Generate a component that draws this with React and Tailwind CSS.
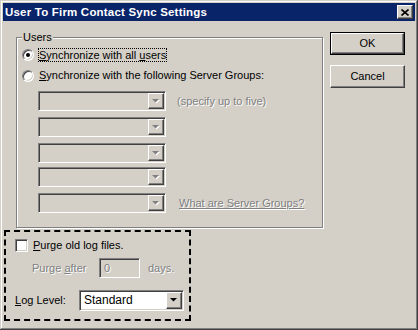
const raised =
  "border border-t-white border-l-white border-r-[#404040] border-b-[#404040] shadow-[inset_-1px_-1px_0_#808080,inset_1px_1px_0_#d4d0c8]";
const sunken =
  "border border-t-[#808080] border-l-[#808080] border-r-white border-b-white shadow-[inset_1px_1px_0_#404040,inset_-1px_-1px_0_#d4d0c8]";
const dim = "text-[#808080] [text-shadow:1px_1px_0_#ffffff]";

function Arrow({ disabled }) {
  return (
    <svg width="8" height="5" viewBox="0 0 8 5" className="overflow-visible">
      {disabled && <path d="M1 1h7L4.5 4.5z" fill="#ffffff" />}
      <path d="M0 0h7L3.5 3.5z" fill={disabled ? "#808080" : "#000000"} />
    </svg>
  );
}

function DropButton({ disabled, tall }) {
  return (
    <div
      className={`${raised} bg-[#d4d0c8] w-[16px] ${tall ? "h-[17px]" : "h-[16px]"} flex items-center justify-center shrink-0`}
    >
      <Arrow disabled={disabled} />
    </div>
  );
}

function Combo({ children }) {
  return (
    <div className="flex items-center h-[20px]">
      <div className={`${sunken} w-[128px] h-[20px] p-[1px] flex justify-end bg-[#d4d0c8]`}>
        <DropButton disabled />
      </div>
      {children}
    </div>
  );
}

function Radio({ checked }) {
  return (
    <div
      className={`w-[12px] h-[12px] rounded-full bg-white flex items-center justify-center shrink-0 border border-t-[#808080] border-l-[#808080] border-r-white border-b-white shadow-[inset_1px_1px_0_#404040,inset_-1px_-1px_0_#d4d0c8]`}
    >
      {checked && <div className="w-[4px] h-[4px] rounded-full bg-black" />}
    </div>
  );
}

export default function App() {
  return (
    <div className="w-[418px] h-[330px] p-[3px] bg-[#d4d0c8] text-[11px] leading-[13px] text-black font-['Liberation_Sans',Arial,sans-serif] shadow-[inset_-1px_-1px_0_#404040,inset_1px_1px_0_#d4d0c8,inset_-2px_-2px_0_#808080,inset_2px_2px_0_#ffffff] select-none">
      {/* title bar */}
      <div className="h-[18px] bg-[#0a246a] flex items-center justify-between pl-[2px] pr-[2px]">
        <span className="text-white font-bold text-[11.5px] tracking-[0.2px]">User To Firm Contact Sync Settings</span>
        <div className={`${raised} bg-[#d4d0c8] w-[16px] h-[14px] flex items-center justify-center`}>
          <svg width="8" height="7" viewBox="0 0 8 7">
            <path d="M0.5 0.5L7.5 6.5M7.5 0.5L0.5 6.5" stroke="#000" strokeWidth="1.6" />
          </svg>
        </div>
      </div>

      <div className="flex">
        <div className="flex flex-col">
          {/* Users group */}
          <div className="relative ml-[13px] mt-[16px] w-[307px] h-[191px] border border-[#808080] shadow-[1px_1px_0_#ffffff,inset_1px_1px_0_#ffffff]">
            <span className="absolute -top-[7px] left-[5px] px-[1px] bg-[#d4d0c8]">Users</span>

            <div className="pl-[5px] mt-[9px] flex items-center h-[15px]">
              <Radio checked />
              <span className="ml-[4px] px-[1px] outline outline-1 outline-dotted outline-black -outline-offset-1 leading-[14px]">
                <u>S</u>ynchronize with all <u>u</u>sers
              </span>
            </div>
            <div className="pl-[5px] mt-[6px] flex items-center h-[15px]">
              <Radio />
              <span className="ml-[5px]">
                <u>S</u>ynchronize with the following Server Groups:
              </span>
            </div>

            <div className="ml-[21px] mt-[8px] flex flex-col">
              <Combo>
                <span className={`ml-[11px] ${dim}`}>(specify up to five)</span>
              </Combo>
              <div className="mt-[6px]">
                <Combo />
              </div>
              <div className="mt-[6px]">
                <Combo />
              </div>
              <div className="mt-[4px]">
                <Combo />
              </div>
              <div className="mt-[6px]">
                <Combo>
                  <span className={`ml-[13px] underline ${dim}`}>What are Server Groups?</span>
                </Combo>
              </div>
            </div>
          </div>

          {/* logging box */}
          <div className="ml-[1px] mt-[2px] w-[187px] h-[91px] border-2 border-dashed border-black pl-[9px] pt-[7px]">
            <div className="flex items-center h-[13px]">
              <div className={`${sunken} w-[13px] h-[13px] bg-white shrink-0`} />
              <span className="ml-[5px]">
                <u>P</u>urge old log files.
              </span>
            </div>
            <div className="flex items-center mt-[6px] h-[20px]">
              <span className={`ml-[17px] w-[67px] ${dim}`}>
                Purge <u>a</u>fter
              </span>
              <div className={`${sunken} w-[41px] h-[20px] bg-[#d4d0c8] flex items-center pl-[4px] ${dim}`}>0</div>
              <span className={`ml-[8px] ${dim}`}>days.</span>
            </div>
            <div className="flex items-center mt-[12px] h-[21px]">
              <span className="w-[64px]">
                <u>L</u>og Level:
              </span>
              <div className={`${sunken} w-[105px] h-[21px] p-[1px] flex items-center bg-white`}>
                <span className="flex-1 pl-[3px] text-[12px]">Standard</span>
                <DropButton tall />
              </div>
            </div>
          </div>
        </div>

        {/* buttons */}
        <div className="ml-[7px] mt-[11px] flex flex-col">
          <div className="w-[75px] h-[23px] border border-black">
            <div className={`${raised} w-full h-full flex items-center justify-center bg-[#d4d0c8]`}>OK</div>
          </div>
          <div className={`${raised} mt-[10px] w-[75px] h-[23px] flex items-center justify-center bg-[#d4d0c8]`}>
            Cancel
          </div>
        </div>
      </div>
    </div>
  );
}
